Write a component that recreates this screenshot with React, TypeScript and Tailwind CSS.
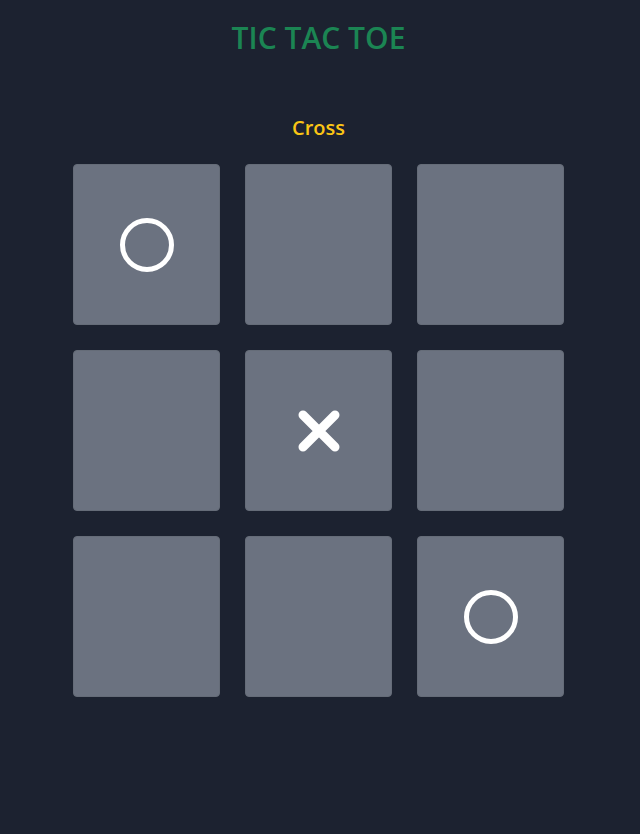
import React, { useState } from "react";

type Mark = "O" | "X" | null;

function Circle() {
  return (
    <svg width="56" height="56" viewBox="0 0 56 56">
      <circle cx="28" cy="28" r="24.5" fill="none" stroke="white" strokeWidth="5" />
    </svg>
  );
}

function Cross() {
  return (
    <svg width="44" height="44" viewBox="0 0 44 44">
      <path d="M6 6 L38 38 M38 6 L6 38" stroke="white" strokeWidth="9" strokeLinecap="round" />
    </svg>
  );
}

export default function App() {
  const [board] = useState<Mark[]>(["O", null, null, null, "X", null, null, null, "O"]);

  return (
    <div className="min-h-[834px] w-full pr-[3px] bg-[#1c2230] flex flex-col items-center font-['Open_Sans',sans-serif]">
      <h1 className="mt-[17px] text-[30px] leading-[42px] font-semibold text-[#1b8553]">
        TIC TAC TOE
      </h1>
      <div className="mt-[55px] text-[20px] leading-[28px] font-semibold text-[#fac515]">Cross</div>
      <div className="mt-[22px] grid grid-cols-3 gap-[25px]">
        {board.map((cell, i) => (
          <button
            key={i}
            className="w-[147px] h-[161px] rounded-[4px] bg-[#6b7280] border border-[#656c78] flex items-center justify-center"
          >
            {cell === "O" && <Circle />}
            {cell === "X" && <Cross />}
          </button>
        ))}
      </div>
    </div>
  );
}
